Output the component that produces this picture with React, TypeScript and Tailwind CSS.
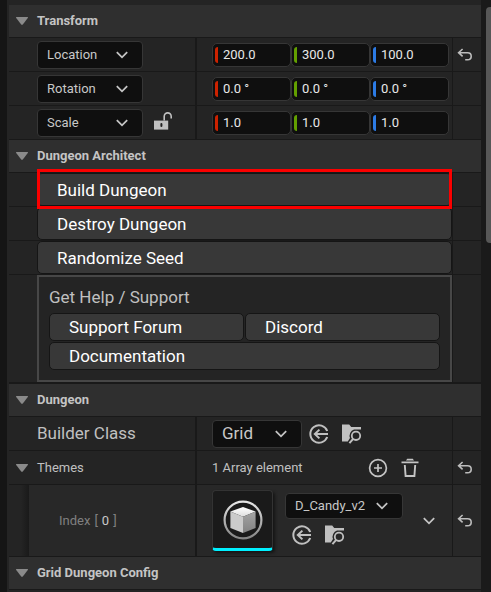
import React from "react";

const LINE = "border-[#191919]";

function Chevron({ className = "" }: { className?: string }) {
  return (
    <svg viewBox="0 0 12 8" className={`h-2 w-3 ${className}`} fill="none" stroke="#c4c4c4" strokeWidth="1.8" aria-hidden="true">
      <path d="M0.8 1.2 L6 6.3 L11.2 1.2" />
    </svg>
  );
}

function Triangle() {
  return (
    <svg viewBox="0 0 12 8" className="h-2 w-3 shrink-0" aria-hidden="true">
      <path d="M0.6 0 H11.4 Q12.4 0 11.8 0.9 L6.8 7.4 Q6 8.3 5.2 7.4 L0.2 0.9 Q-0.4 0 0.6 0 Z" fill="#8a8a8a" />
    </svg>
  );
}

function ResetIcon() {
  return (
    <svg viewBox="0 0 16 14" className="h-3.5 w-4" fill="none" stroke="#bdbdbd" strokeWidth="1.6" aria-hidden="true">
      <path d="M5.6 1 L1.6 4.7 L5.6 8.4 M1.6 4.7 H10.6 C13 4.7 14.2 6.3 14.2 8.2 C14.2 10.2 12.8 11.8 10.6 11.8 H8.2" />
    </svg>
  );
}

function UseSelectedIcon() {
  return (
    <svg viewBox="0 0 20 20" className="size-5" fill="none" stroke="#c0c0c0" strokeWidth="2" aria-hidden="true">
      <path d="M18.2 7 A8.7 8.7 0 1 0 18.2 13" />
      <path d="M19 10 H5.8 M10.4 5.6 L5.8 10 L10.4 14.4" />
    </svg>
  );
}

function BrowseIcon() {
  return (
    <svg viewBox="0 0 21 20" className="h-5 w-[21px]" fill="none" aria-hidden="true">
      <path d="M1 0.6 H8.2 L10.2 3 H20 V5.6 H13 A6.4 6.4 0 0 0 9 14 L6.8 17.4 H1 Z" fill="#c0c0c0" />
      <circle cx="15" cy="11.8" r="4.2" stroke="#c0c0c0" strokeWidth="1.8" />
      <path d="M12.2 14.8 L8.4 19.2" stroke="#c0c0c0" strokeWidth="2" />
    </svg>
  );
}

function UnlockIcon() {
  return (
    <svg viewBox="0 0 18 18" className="size-[18px]" aria-hidden="true">
      <path d="M0 8.6 H14.2 V17.6 H0 Z" fill="#c0c0c0" />
      <path d="M10.2 8.6 V4.4 A3.5 3.5 0 0 1 17.2 4.4 V6.4" fill="none" stroke="#c0c0c0" strokeWidth="1.6" />
      <rect x="6.4" y="11" width="2" height="4" rx="1" fill="#222222" />
    </svg>
  );
}

function AddIcon() {
  return (
    <svg viewBox="0 0 20 20" className="size-5" fill="none" stroke="#c4c4c4" strokeWidth="1.7" aria-hidden="true">
      <circle cx="10" cy="10" r="8.4" />
      <path d="M10 6 V14 M6 10 H14" />
    </svg>
  );
}

function TrashIcon() {
  return (
    <svg viewBox="0 0 18 20" className="h-5 w-[18px]" fill="none" aria-hidden="true">
      <path d="M0.5 3.4 H17.5 V5.2 H0.5 Z M5 2.4 L6.2 0.8 H11.8 L13 2.4 Z" fill="#c4c4c4" />
      <path d="M3.8 7 L4.6 18 H13.4 L14.2 7" stroke="#c4c4c4" strokeWidth="1.9" />
    </svg>
  );
}

function CubeIcon() {
  return (
    <svg viewBox="0 0 40 40" className="size-10" aria-hidden="true">
      <defs>
        <linearGradient id="ring" x1="0" y1="0" x2="0" y2="1">
          <stop offset="0" stopColor="#e6e6e6" />
          <stop offset="1" stopColor="#858585" />
        </linearGradient>
        <linearGradient id="top" x1="0" y1="0" x2="0" y2="1">
          <stop offset="0" stopColor="#ffffff" />
          <stop offset="1" stopColor="#dedede" />
        </linearGradient>
        <linearGradient id="right" x1="0" y1="0" x2="0" y2="1">
          <stop offset="0" stopColor="#a4a4a4" />
          <stop offset="1" stopColor="#828282" />
        </linearGradient>
      </defs>
      <circle cx="20" cy="20" r="18.4" fill="none" stroke="url(#ring)" strokeWidth="2.2" />
      <path d="M20 7 L32.6 11.5 L20 16.8 L7.4 11.5 Z" fill="url(#top)" />
      <path d="M7.4 11.5 L20 16.8 V33 L7.4 28 Z" fill="#cbcbcb" />
      <path d="M32.6 11.5 L20 16.8 V33 L32.6 28 Z" fill="url(#right)" />
    </svg>
  );
}

function SectionHeader({ title }: { title: string }) {
  return (
    <h2 className={`border-b ${LINE} bg-[#2f2f2f] text-[13px] font-bold text-[#c4c4c4]`}>
      <button type="button" className="flex h-8 w-full items-center gap-[9px] pl-[7px] text-left">
        <Triangle />
        {title}
      </button>
    </h2>
  );
}

function Dropdown({ label, value, className }: { label: string; value: string; className: string }) {
  return (
    <span className={`relative inline-flex ${className}`}>
      <select
        aria-label={label}
        defaultValue={value}
        className="size-full appearance-none rounded border border-[#363636] bg-[#0f0f0f] pl-[9px] text-[#c8c8c8] outline-none"
      >
        <option>{value}</option>
      </select>
      <span className="pointer-events-none absolute inset-y-0 right-[15px] flex items-center">
        <Chevron />
      </span>
    </span>
  );
}

function ResetCell({ active = false, name }: { active?: boolean; name: string }) {
  return (
    <div className={`flex items-center justify-center border-l ${LINE}`}>
      {active && (
        <button type="button" aria-label={`Reset ${name}`} className="pr-1">
          <ResetIcon />
        </button>
      )}
    </div>
  );
}

function PropertyRow({
  label,
  children,
  name,
  reset,
  height = "h-[34px]",
  indented = false,
}: {
  label: React.ReactNode;
  children: React.ReactNode;
  name: string;
  reset?: boolean;
  height?: string;
  indented?: boolean;
}) {
  return (
    <div
      className={`grid grid-cols-[188px_minmax(0,1fr)_29px] border-b ${LINE} ${height} ${indented ? "bg-[#282828]" : "bg-[#242424]"}`}
    >
      <div className={`flex items-center border-r-2 ${LINE}`}>{label}</div>
      <div className="flex items-center pl-[15px]">{children}</div>
      <ResetCell active={reset} name={name} />
    </div>
  );
}

const AXES = [
  { axis: "X", color: "bg-[#cc2200]" },
  { axis: "Y", color: "bg-[#63a000]" },
  { axis: "Z", color: "bg-[#2c7be5]" },
];

function VectorInputs({ name, values }: { name: string; values: string[] }) {
  return (
    <div className="grid w-full grid-cols-3 pr-[3px]">
      {AXES.map(({ axis, color }, i) => (
        <label
          key={axis}
          className="flex h-6 items-center gap-[5px] rounded-[5px] border border-[#363636] bg-[#0f0f0f] pl-[2px]"
        >
          <span className={`h-4 w-[3px] shrink-0 rounded-l-sm ${color}`} />
          <input
            aria-label={`${name} ${axis}`}
            defaultValue={values[i]}
            className="w-full min-w-0 bg-transparent text-[13px] text-[#e8e8e8] outline-none"
          />
        </label>
      ))}
    </div>
  );
}

function PanelButton({ label, className }: { label: string; className: string }) {
  return (
    <button
      type="button"
      className={`rounded-[5px] border border-[#151515] bg-[#383838] pl-[19px] text-left text-[17px] leading-5 text-white ${className}`}
    >
      {label}
    </button>
  );
}

function ActionRow({ label, highlighted = false }: { label: string; highlighted?: boolean }) {
  return (
    <div className={`grid h-[34px] grid-cols-[minmax(0,1fr)_29px] border-b ${LINE} bg-[#242424]`}>
      <div className="relative flex pl-7">
        <PanelButton label={label} className="h-full w-full" />
        {highlighted && (
          <span className="pointer-events-none absolute -bottom-[3px] -top-1 left-7 right-0 z-10 border-[3px] border-[#fb0000]" />
        )}
      </div>
      <ResetCell name={label} />
    </div>
  );
}

export default function App() {
  return (
    <div className="flex min-h-screen w-full overflow-hidden bg-[#1a1a1a] font-['Roboto','Liberation_Sans',sans-serif] text-[13px] text-[#c0c0c0]">
      <div className="w-[7px] shrink-0 bg-[#151515]" />
      <main className="min-w-0 flex-1 bg-[#242424] pl-[2px] pt-[5px]">
        <section>
          <SectionHeader title="Transform" />
          <PropertyRow
            name="Location"
            reset
            label={<Dropdown label="Location mode" value="Location" className="ml-7 h-7 w-[106px]" />}
          >
            <VectorInputs name="Location" values={["200.0", "300.0", "100.0"]} />
          </PropertyRow>
          <PropertyRow
            name="Rotation"
            label={<Dropdown label="Rotation mode" value="Rotation" className="ml-7 h-7 w-[106px]" />}
          >
            <VectorInputs name="Rotation" values={["0.0 °", "0.0 °", "0.0 °"]} />
          </PropertyRow>
          <PropertyRow
            name="Scale"
            label={
              <>
                <Dropdown label="Scale mode" value="Scale" className="ml-7 h-7 w-[106px]" />
                <button type="button" aria-label="Lock scale ratio" className="ml-[11px] pb-1">
                  <UnlockIcon />
                </button>
              </>
            }
          >
            <VectorInputs name="Scale" values={["1.0", "1.0", "1.0"]} />
          </PropertyRow>
        </section>

        <section>
          <SectionHeader title="Dungeon Architect" />
          <ActionRow label="Build Dungeon" highlighted />
          <ActionRow label="Destroy Dungeon" />
          <ActionRow label="Randomize Seed" />
          <div className={`grid grid-cols-[minmax(0,1fr)_29px] border-b-2 ${LINE}`}>
            <div className="pl-7">
              <div className="border-2 border-[#474747] p-[10px]">
                <h3 className="pb-[6px] text-[17px] leading-5">Get Help / Support</h3>
                <div className="grid grid-cols-2 gap-px">
                  <PanelButton label="Support Forum" className="h-7" />
                  <PanelButton label="Discord" className="h-7" />
                  <PanelButton label="Documentation" className="col-span-2 h-7" />
                </div>
              </div>
            </div>
            <ResetCell name="Support" />
          </div>
        </section>

        <section>
          <SectionHeader title="Dungeon" />
          <PropertyRow name="Builder Class" label={<span className="pl-7 text-[17px]">Builder Class</span>}>
            <Dropdown label="Builder Class" value="Grid" className="h-7 w-[90px] text-[17px]" />
            <button type="button" aria-label="Use selected class" className="ml-[7px]">
              <UseSelectedIcon />
            </button>
            <button type="button" aria-label="Browse to class" className="ml-3">
              <BrowseIcon />
            </button>
          </PropertyRow>
          <PropertyRow
            name="Themes"
            reset
            label={
              <button type="button" className="flex items-center gap-[9px] pl-[7px]">
                <Triangle />
                Themes
              </button>
            }
          >
            <span>1 Array element</span>
            <button type="button" aria-label="Add element" className="ml-auto">
              <AddIcon />
            </button>
            <button type="button" aria-label="Remove all elements" className="ml-[13px] mr-[33px]">
              <TrashIcon />
            </button>
          </PropertyRow>
          <PropertyRow
            name="Index 0"
            reset
            indented
            height="h-[72px]"
            label={
              <>
                <span className="h-full w-3 bg-[#242424]" />
                <span className="h-full w-2 bg-linear-to-r from-[#242424] to-[#1a1a1a]" />
                <span className="flex gap-1 pl-[30px] text-[#808080]">
                  <span>Index</span>
                  <span>[</span>
                  <span className="text-[#c8c8c8]">0</span>
                  <span>]</span>
                </span>
              </>
            }
          >
            <div className="flex h-[61px] w-[61px] shrink-0 items-center justify-center rounded border border-b-[3px] border-[#333333] border-b-[#00f0ff] bg-[#1a1a1a] shadow-[2px_2px_3px_#151515]">
              <CubeIcon />
            </div>
            <div className="ml-3 flex flex-col gap-[6px] pb-1">
              <Dropdown label="Theme asset" value="D_Candy_v2" className="h-[26px] w-[118px]" />
              <div className="flex gap-3 pl-[7px]">
                <button type="button" aria-label="Use selected asset">
                  <UseSelectedIcon />
                </button>
                <button type="button" aria-label="Browse to asset">
                  <BrowseIcon />
                </button>
              </div>
            </div>
            <button type="button" aria-label="Element options" className="ml-auto mr-[17px]">
              <Chevron />
            </button>
          </PropertyRow>
        </section>

        <section>
          <SectionHeader title="Grid Dungeon Config" />
        </section>
      </main>
      <div className="flex w-[10px] shrink-0 pl-[5px] pt-[7px]">
        <div className="h-[236px] w-full rounded-l bg-[#575757]" />
      </div>
    </div>
  );
}
